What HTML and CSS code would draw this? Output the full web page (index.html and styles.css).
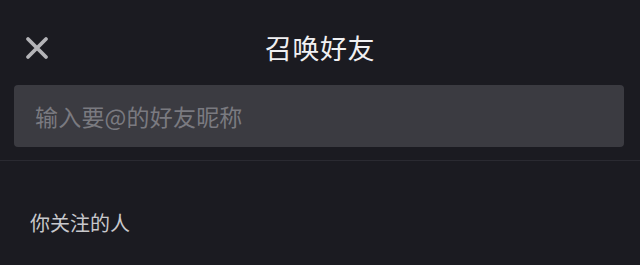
FILE: index.html
```html
<!DOCTYPE html>
<html lang="zh-CN">
<head>
<meta charset="utf-8">
<link rel="stylesheet" href="styles.css">
</head>
<body>
<div class="page">
  <header class="header">
    <div class="header-left">
      <svg class="close" width="24" height="24" viewBox="0 0 24 24">
        <path d="M3 3 L21 21 M21 3 L3 21" stroke="#b4b4b8" stroke-width="3.8" stroke-linecap="round" fill="none"/>
      </svg>
    </div>
    <h1 class="title">召唤好友</h1>
    <div class="header-right"></div>
  </header>
  <div class="search-wrap">
    <div class="search">输入要@的好友昵称</div>
  </div>
  <div class="divider"></div>
  <div class="section-label">你关注的人</div>
</div>
</body>
</html>
```
FILE: styles.css
```css
html, body {
  margin: 0;
  padding: 0;
  background: #1b1b21;
}
.page {
  width: 640px;
  height: 265px;
  overflow: hidden;
  background: #1b1b21;
  font-family: "Noto Sans CJK SC", "Noto Sans", sans-serif;
}
.header {
  display: grid;
  grid-template-columns: 1fr auto 1fr;
  align-items: center;
  height: 48px;
  padding-top: 24px;
}
.header-left {
  display: flex;
  align-items: center;
  padding-left: 25px;
}
.close {
  display: block;
}
.title {
  margin: 0;
  font-size: 27px;
  font-weight: 400;
  line-height: 48px;
  color: #f0f0f2;
  letter-spacing: 0.5px;
}
.search-wrap {
  padding: 13px 16px 13px 14px;
}
.search {
  height: 62px;
  box-sizing: border-box;
  border-radius: 4px;
  background: #3b3b41;
  padding-left: 21px;
  display: flex;
  align-items: center;
  font-size: 23px;
  letter-spacing: 0.2px;
  color: #7a7a80;
}
.divider {
  height: 1px;
  background: #2a2a31;
}
.section-label {
  margin-top: 48px;
  padding-left: 30px;
  font-size: 20px;
  line-height: 28px;
  color: #c8c8cc;
}
```
